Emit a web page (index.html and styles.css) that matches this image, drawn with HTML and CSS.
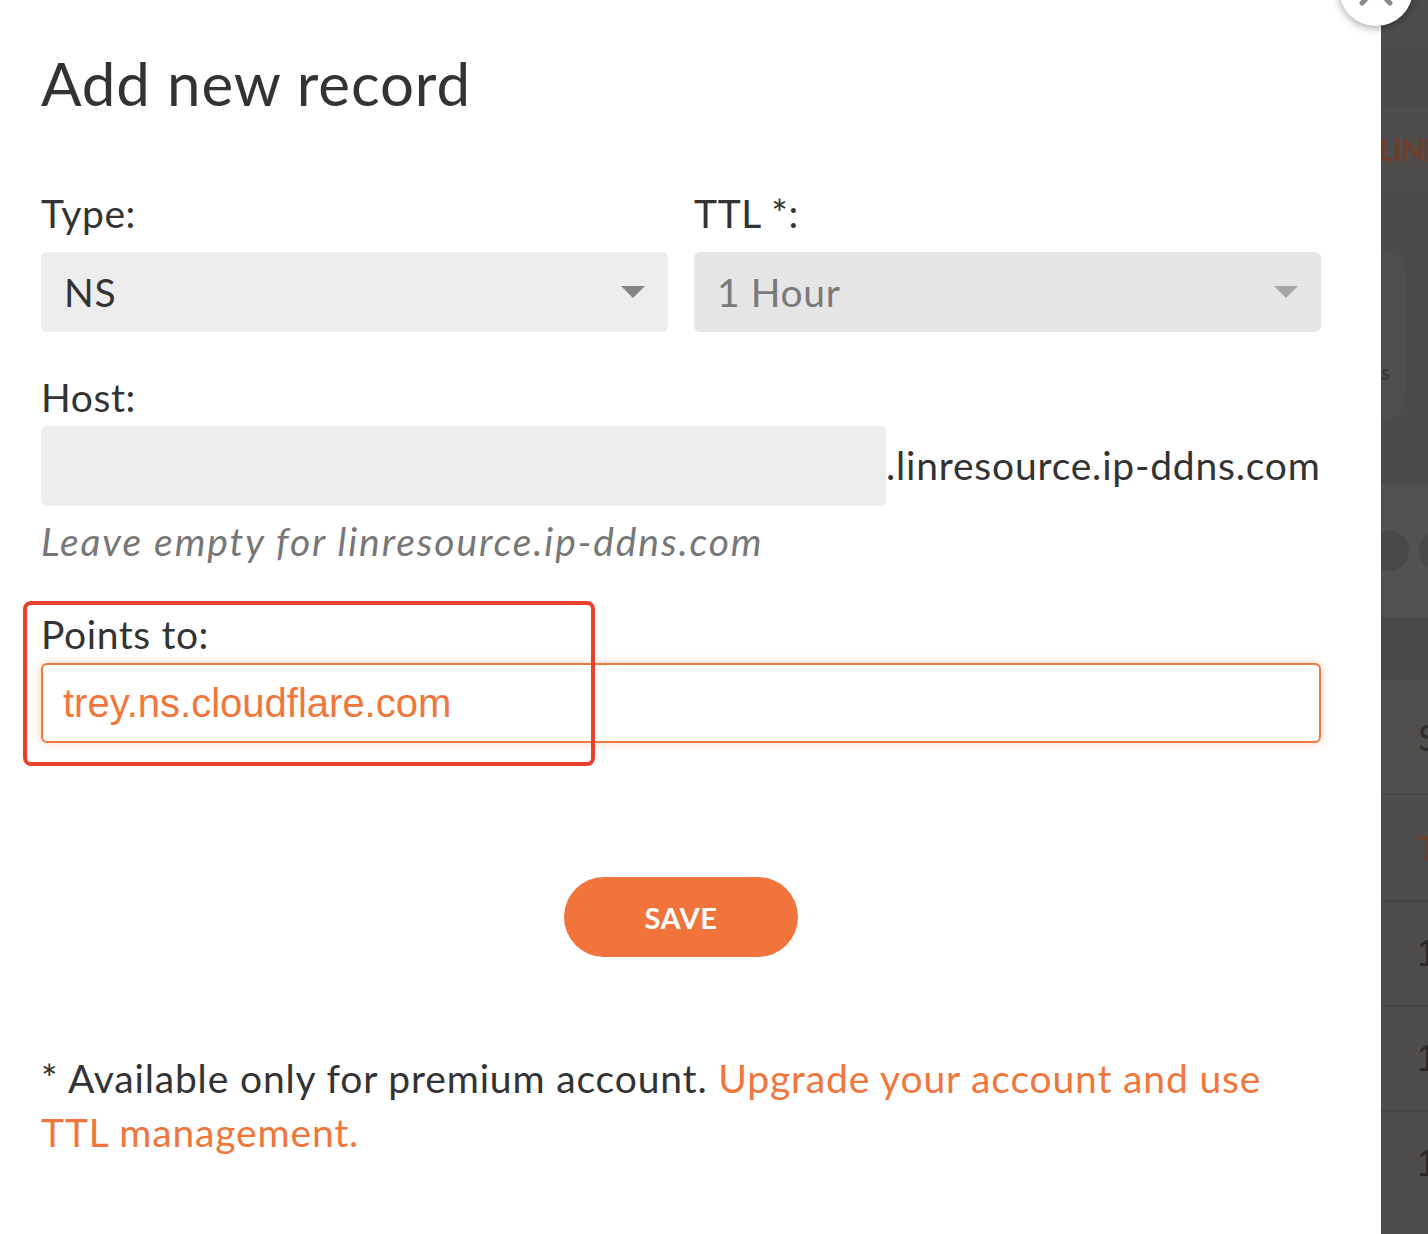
FILE: index.html
```html
<!DOCTYPE html>
<html lang="en">
<head>
<meta charset="utf-8">
<title>Add new record</title>
<link rel="stylesheet" href="styles.css">
</head>
<body>
<div class="page">
  <main class="modal">
    <h1 class="title">Add new record</h1>
    <div class="row-two">
      <div class="field">
        <label class="label">Type:</label>
        <div class="select">
          <span class="select-value">NS</span>
          <span class="caret"></span>
        </div>
      </div>
      <div class="field">
        <label class="label">TTL *:</label>
        <div class="select select-disabled">
          <span class="select-value">1 Hour</span>
          <span class="caret"></span>
        </div>
      </div>
    </div>
    <div class="field field-host">
      <label class="label label-tight">Host:</label>
      <div class="host-row">
        <div class="input input-host"></div>
        <span class="suffix">.linresource.ip-ddns.com</span>
      </div>
      <p class="hint">Leave empty for linresource.ip-ddns.com</p>
    </div>
    <div class="field field-points">
      <label class="label label-tight">Points to:</label>
      <div class="input input-focus"><span class="input-value">trey.ns.cloudflare.com</span></div>
      <div class="annotation"></div>
    </div>
    <div class="actions">
      <button class="save">SAVE</button>
    </div>
    <p class="note">* Available only for premium account. <a class="link" href="#">Upgrade your account and use TTL management.</a></p>
  </main>
  <aside class="backdrop">
    <div class="bd-band bd-a"></div>
    <div class="bd-band bd-b"></div>
    <div class="bd-band bd-c"><span class="bd-brand">LINI</span></div>
    <div class="bd-band bd-d">
      <div class="bd-card"><span class="bd-s">s</span></div>
    </div>
    <div class="bd-band bd-e"><span class="bd-dot"></span><span class="bd-dot"></span></div>
    <div class="bd-band bd-f"></div>
    <div class="bd-band bd-g"><span class="bd-s2">S</span></div>
    <div class="bd-band bd-h"><span class="bd-t">T</span></div>
    <div class="bd-band bd-row"><span class="bd-one">1</span></div>
    <div class="bd-band bd-row"><span class="bd-one">1</span></div>
    <div class="bd-band bd-row"><span class="bd-one">1</span></div>
  </aside>
  <div class="close">
    <svg class="close-x" width="40" height="40" viewBox="0 0 40 40"><path d="M6 6 L34 34 M34 6 L6 34" stroke="#8a8a8a" stroke-width="5" stroke-linecap="round" fill="none"/></svg>
  </div>
</div>
</body>
</html>
```

FILE: styles.css
```css
* { box-sizing: border-box; }
html, body { margin: 0; padding: 0; }
body {
  width: 1428px;
  height: 1234px;
  overflow: hidden;
  background: #ffffff;
  font-family: "Lato", "Open Sans", sans-serif;
  color: #333333;
}
.page {
  position: relative;
  display: flex;
  width: 1428px;
  height: 1234px;
}
.modal {
  width: 1381px;
  flex: none;
  background: #ffffff;
  padding: 0 60px 0 41px;
}
.title {
  margin: 47px 0 0 0;
  font-weight: 400;
  font-size: 60px;
  line-height: 72px;
  color: #333333;
  letter-spacing: 0.9px;
}
.row-two {
  display: grid;
  grid-template-columns: 627px 627px;
  column-gap: 26px;
  margin-top: 71px;
}
.field { display: flex; flex-direction: column; position: relative; }
.label {
  font-size: 39px;
  line-height: 46px;
  letter-spacing: 0.6px;
  color: #333333;
  margin-bottom: 16px;
}
.label-tight { margin-bottom: 6px; }
.select {
  height: 80px;
  background: #ededed;
  border-radius: 6px;
  display: flex;
  align-items: center;
  justify-content: space-between;
  padding: 0 23px 0 23px;
}
.select-value {
  font-size: 39px;
  letter-spacing: 0.6px;
  color: #333333;
}
.select-disabled { background: #e6e6e6; }
.select-disabled .select-value { color: #7a7a7a; }
.caret {
  width: 0; height: 0;
  border-left: 12px solid transparent;
  border-right: 12px solid transparent;
  border-top: 12px solid #858585;
}
.select-disabled .caret { border-top-color: #a6a6a6; }
.field-host { margin-top: 42px; }
.host-row {
  display: flex;
  align-items: flex-end;
}
.input {
  height: 80px;
  border-radius: 6px;
  background: #ededed;
}
.input-host { width: 845px; flex: none; }
.suffix {
  font-size: 39px;
  line-height: 46px;
  letter-spacing: 0.8px;
  margin-bottom: 18px;
  color: #333333;
  white-space: nowrap;
}
.hint {
  margin: 12px 0 0 0;
  font-size: 39px;
  line-height: 46px;
  letter-spacing: 1.9px;
  font-style: italic;
  color: #777777;
}
.field-points { margin-top: 47px; }
.input-focus {
  background: #ffffff;
  border: 2px solid #f07a3e;
  box-shadow: 0 0 10px rgba(240, 122, 62, 0.35);
  display: flex;
  align-items: center;
  padding-left: 20px;
}
.input-value {
  font-family: "Liberation Sans", Arial, sans-serif;
  font-size: 40px;
  color: #f0763c;
}
.annotation {
  position: absolute;
  left: -18px;
  top: -10px;
  width: 572px;
  height: 165px;
  border: 4px solid #e8402b;
  border-radius: 8px;
  pointer-events: none;
}
.actions {
  display: flex;
  justify-content: center;
  margin-top: 134px;
}
.save {
  width: 234px;
  height: 80px;
  border: none;
  border-radius: 40px;
  background: #f0743b;
  color: #ffffff;
  font-family: "Lato", "Open Sans", sans-serif;
  font-weight: 700;
  font-size: 29px;
  letter-spacing: 0.6px;
  cursor: pointer;
  padding: 0;
}
.note {
  margin: 94px 0 0 0;
  font-size: 39px;
  line-height: 54px;
  letter-spacing: 0.85px;
  color: #333333;
}
.link { color: #f0763c; text-decoration: none; }

/* dimmed page behind the modal */
.backdrop {
  flex: 1;
  background: #4e4c4a;
  display: flex;
  flex-direction: column;
  overflow: hidden;
}
.bd-band { flex: none; position: relative; }
.bd-a { height: 47px; background: #4f4d4b; }
.bd-b { height: 60px; background: #4c4a48; }
.bd-c { height: 83px; background: #4f4d4b; display: flex; align-items: center; }
.bd-brand {
  font-family: "Lato", sans-serif;
  font-weight: 700;
  font-size: 30px;
  color: #6e3e2c;
  margin-left: -2px;
  letter-spacing: -1px;
}
.bd-d { height: 295px; background: #4d4b49; padding-top: 60px; }
.bd-card {
  width: 25px;
  height: 170px;
  background: #504e4c;
  border-radius: 0 22px 22px 0;
  position: relative;
}
.bd-s {
  position: absolute;
  left: 0;
  top: 110px;
  font-family: "Lato", sans-serif;
  font-weight: 700;
  font-size: 20px;
  color: #3a3837;
}
.bd-e { height: 132px; background: #525050; display: flex; align-items: center; gap: 10px; margin-left: -12px; }
.bd-dot { width: 40px; height: 40px; border-radius: 50%; background: #4a4847; flex: none; }
.bd-f { height: 63px; background: #4a4847; }
.bd-g { height: 115px; background: #504e4c; border-bottom: 2px solid #484645; display: flex; align-items: center; }
.bd-s2 { font-size: 36px; color: #2f2e2d; margin-left: 37px; }
.bd-h { height: 105px; background: #4f4d4b; display: flex; align-items: center; }
.bd-t { font-size: 36px; color: #6e3e2c; margin-left: 36px; }
.bd-row { height: 105px; background: #4f4d4b; border-top: 2px solid #474544; display: flex; align-items: center; }
.bd-one { font-size: 36px; color: #2a2928; margin-left: 36px; font-family: "Liberation Sans", sans-serif; }

.close {
  position: absolute;
  left: 1339px;
  top: -48px;
  width: 74px;
  height: 74px;
  border-radius: 50%;
  background: #ffffff;
  box-shadow: 0 2px 8px rgba(0, 0, 0, 0.35);
  display: flex;
  align-items: center;
  justify-content: center;
}
.close-x { display: block; }
```
